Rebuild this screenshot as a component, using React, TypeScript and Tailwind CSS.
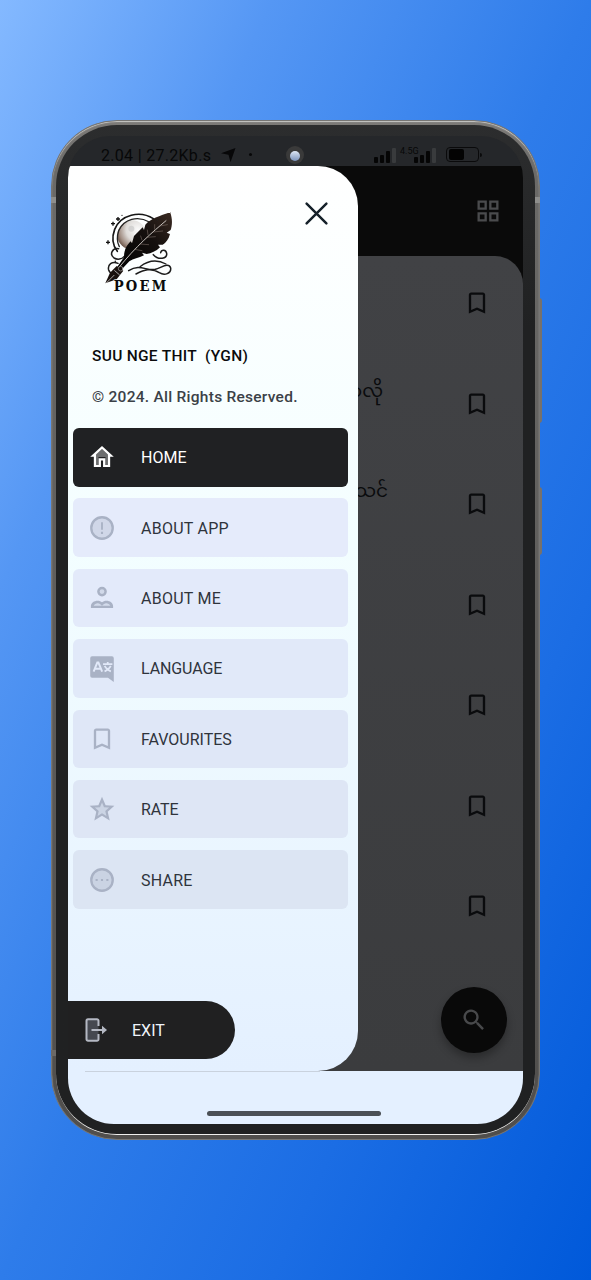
import type { ReactNode } from "react";

const FONT = "font-['Roboto','Inter','Noto_Sans',sans-serif]";

type IconProps = { children: ReactNode; className?: string };

function Icon({ children, className = "size-7" }: IconProps) {
  return (
    <svg viewBox="0 0 24 24" fill="currentColor" className={`block shrink-0 ${className}`}>
      {children}
    </svg>
  );
}

const homeIcon = (
  <Icon>
    <path opacity=".35" d="M12 5.2 6 10.6V19h3v-7h6v7h3v-8.4z" />
    <path d="M12 2.600 1.900 11.700h3.100V20.600h6.100v-5.600h1.800v5.600h6.100v-8.900h3.100L12 2.600zm5.100 16.200H14.900V13H9.100v5.800H6.900V9.800L12 5.200l5.100 4.600v9z" />
  </Icon>
);

const aboutIcon = (
  <Icon>
    <circle cx="12" cy="12" r="9" opacity=".35" />
    <path d="M12 1.800a10.200 10.200 0 1 0 0 20.400 10.200 10.200 0 0 0 0-20.400zm0 18.400a8.200 8.200 0 1 1 0-16.400 8.200 8.200 0 0 1 0 16.400z" />
    <path d="M11.200 7h1.600v6.600h-1.600zM11.100 15.300h1.800v1.800h-1.800z" />
  </Icon>
);

const personIcon = (
  <Icon>
    <circle cx="12" cy="6.500" r="3.100" fill="currentColor" fillOpacity=".3" stroke="currentColor" strokeWidth="2.100" />
    <path d="M2.500 20.500v-1.600c0-2.700 2.700-4.600 5.700-4.600 1.500 0 2.900.5 3.800 1.400.9-.9 2.300-1.400 3.800-1.400 3 0 5.700 1.900 5.700 4.600v1.600z" />
    <path d="M4.900 18.700c.5-1.500 2-2.300 3.500-2.300 1.400 0 2.300 1 3.600 2.300 1.300-1.300 2.200-2.300 3.600-2.300 1.500 0 3 .8 3.500 2.300z" fill="#d3dbeb" />
  </Icon>
);

const languageIcon = (
  <Icon>
    <path d="M3.500 2h17a1.600 1.600 0 0 1 1.600 1.600v20.300l-5-3.600H3.500a1.600 1.600 0 0 1-1.600-1.600V3.600A1.600 1.600 0 0 1 3.500 2z" />
    <path d="M4.800 15.200 8 7.200h.9l3.200 8M6 12.700h5.200" fill="none" stroke="#e2e9f9" strokeWidth="1.700" />
    <path d="M12.900 8.700h8M16.900 6.800v1.900M14.300 10.200c.6 1.300 1.700 2.400 2.600 3.100.9-.7 2-1.800 2.600-3.100M14.200 14.900c1-.4 1.900-.9 2.700-1.600.8.700 1.700 1.200 2.700 1.600" fill="none" stroke="#e2e9f9" strokeWidth="1.500" />
  </Icon>
);

const bookmarkPath = "M17 3H7c-1.100 0-2 .9-2 2v16l7-3 7 3V5c0-1.100-.9-2-2-2zm0 15-5-2.200L7 18V5h10v13z";

const favouriteIcon = (
  <Icon>
    <path d={bookmarkPath} />
  </Icon>
);

const starIcon = (
  <Icon>
    <path opacity=".35" d="m12 4.500 2 5.300 6 .5-4.500 4 1.300 5.500-4.800-3-4.800 3 1.300-5.500-4.500-4 6-.5z" />
    <path d="m22.600 9.300-7.500-.6L12 1.600 8.900 8.700l-7.500.6 5.700 5-1.700 7.500 6.600-4 6.600 4-1.700-7.500 5.700-5zM12 15.700l-3.800 2.300 1-4.300-3.300-2.900 4.400-.4L12 6.400l1.700 4 4.400.4-3.300 2.900 1 4.300z" />
  </Icon>
);

const shareIcon = (
  <Icon>
    <circle cx="12" cy="12" r="9" opacity=".35" />
    <path d="M12 1.800a10.200 10.200 0 1 0 0 20.400 10.200 10.200 0 0 0 0-20.400zm0 18.400a8.200 8.200 0 1 1 0-16.400 8.200 8.200 0 0 1 0 16.400z" />
    <path d="M6.500 11.200h1.800v1.600H6.500zM11.100 11.200h1.800v1.600h-1.800zM15.700 11.200h1.800v1.600h-1.800z" />
  </Icon>
);

const menu = [
  { label: "HOME", icon: homeIcon, style: "bg-[#202123] text-white", text: "text-white tracking-[0px]" },
  { label: "ABOUT APP", icon: aboutIcon, style: "bg-[#e5ebfb] text-[#a9b2c5]", text: "text-[#2f343c] tracking-[0.25px]" },
  { label: "ABOUT ME", icon: personIcon, style: "bg-[#e3eafa] text-[#a9b2c5]", text: "text-[#2f343c] tracking-[0.25px]" },
  { label: "LANGUAGE", icon: languageIcon, style: "bg-[#e1e9f9] text-[#a9b2c5]", text: "text-[#2f343c] tracking-[-0.1px]" },
  { label: "FAVOURITES", icon: favouriteIcon, style: "bg-[#dfe7f7] text-[#a9b2c5]", text: "text-[#2f343c] tracking-[0px]" },
  { label: "RATE", icon: starIcon, style: "bg-[#dee6f5] text-[#a9b2c5]", text: "text-[#2f343c] tracking-[-0.1px]" },
  { label: "SHARE", icon: shareIcon, style: "bg-[#dce5f3] text-[#a9b2c5]", text: "text-[#2f343c] tracking-[0.25px]" },
];

const poems = [
  { title: "", width: "w-[320px]" },
  { title: "လာလို", width: "w-[315px]" },
  { title: "သင်", width: "w-[320px]" },
  { title: "", width: "w-[320px]" },
  { title: "", width: "w-[320px]" },
  { title: "", width: "w-[320px]" },
  { title: "", width: "w-[320px]" },
];

function PoemLogo() {
  return (
    <svg viewBox="0 0 300 300" className="block size-[100px]" fill="none" strokeLinecap="round">
      <defs>
        <radialGradient id="moon" cx="70%" cy="32%" r="80%">
          <stop offset="0" stopColor="#fafafa" />
          <stop offset=".5" stopColor="#dedbd8" />
          <stop offset=".8" stopColor="#a08d82" />
          <stop offset="1" stopColor="#5d463a" />
        </radialGradient>
        <linearGradient id="quill" x1="1" y1="0" x2="0" y2="1">
          <stop offset="0" stopColor="#3a2a22" />
          <stop offset=".4" stopColor="#15100e" />
          <stop offset="1" stopColor="#000" />
        </linearGradient>
      </defs>
      <circle cx="126" cy="105" r="44" fill="url(#moon)" />
      <circle cx="124" cy="86" r="9" fill="#c4c4c4" opacity=".6" />
      <circle cx="138" cy="104" r="6" fill="#fff" opacity=".6" />
      <path d="M190 56C150 30 92 44 74 88c-9 24-6 48 8 66" stroke="#161616" strokeWidth="5" />
      <path d="M178 66C144 46 102 56 86 92c-6 18-5 34 2 48" stroke="#222" strokeWidth="4" />
      <path d="M86 146c-20-4-28 18-14 28 10 6 24 4 30-4M84 190c-18-8-32 4-28 20 4 12 18 14 26 6" stroke="#1c1c1c" strokeWidth="4.500" />
      <path d="M190 164c16 18 42 12 40-4-2-12-16-12-18-2M116 212c34-22 54 2 80-4 20-6 40-22 46-4 2 16-18 24-34 14-24-16-46-8-70 4" stroke="#1c1c1c" strokeWidth="4.500" />
      <path d="M150 200c26-20 52-22 78-8" stroke="#1c1c1c" strokeWidth="4" />
      <path d="M240 36c9 22 6 42 2 54l-12 8 10 4c-4 16-12 26-22 32l-14 0 6 8c-12 12-26 18-40 20l-14-4 6 8c-16 8-32 10-44 18l-28 30-12-8 24-34c0-22 8-36 20-48l4 6 6-22 26-26 4 8 4-16c16-18 42-26 76-38z" fill="url(#quill)" />
      <path d="M228 62C188 96 138 138 84 206" stroke="#ece7e2" strokeWidth="2.500" />
      <path d="m174 104-2-14M194 88l0-14M156 120l-4-12M210 78l22-4M170 112l26-2M190 96l28-3M150 132l26 2M134 148l22 4" stroke="#8d7d74" strokeWidth="1.500" />
      <path d="m80 198 20 14-20 26-34 12 14-32z" fill="#17100d" />
      <path d="m74 212 14 12M50 248l22-22" stroke="#eee" strokeWidth="2" />
      <circle cx="92" cy="206" r="7" fill="#17100d" stroke="#ddd" strokeWidth="1.500" />
      <path d="M69 65v12M63 71h12M84 51v12M78 57h12M54 121v12M48 127h12" stroke="#111" strokeWidth="4" strokeLinecap="butt" />
      <circle cx="96" cy="46" r="2" fill="#222" />
      <circle cx="76" cy="184" r="2.500" fill="#222" />
      <circle cx="202" cy="60" r="2" fill="#222" />
      <text transform="translate(71 273) scale(.84 1)" textLength="188" fill="#0b0b0b" stroke="#f8ffff" strokeWidth="3" paintOrder="stroke" className="font-['DejaVu_Serif','Liberation_Serif',serif] text-[47px] font-bold">POEM</text>
    </svg>
  );
}

function Signal() {
  return (
    <div className="flex h-4 items-end gap-[2px]">
      <i className="h-[6px] w-1 rounded-[1px] bg-[#050505]" />
      <i className="h-[8px] w-1 rounded-[1px] bg-[#050505]" />
      <i className="h-[12px] w-1 rounded-[1px] bg-[#050505]" />
      <i className="h-[15px] w-1 rounded-[1px] bg-[#393b3d]" />
    </div>
  );
}

function StatusBar() {
  return (
    <div className="flex h-[30px] shrink-0 items-center bg-[#25272a] pt-[7px] text-[#070708]">
      <span className="mt-[2px] ml-[33px] w-[110px] whitespace-nowrap text-[16px] tracking-[0.300px]">2.04 | 27.2Kb.s</span>
      <svg viewBox="0 0 16 16" className="ml-[10px] size-4"><path fill="currentColor" d="M14.500 1 0 6.200l7.500 1.500 2 7.500z" /></svg>
      <i className="ml-[12px] size-[3px] rounded-full bg-[#070708]" />
      <span className="ml-[34px] flex size-[18px] items-center justify-center rounded-full bg-[#3a3a3a] pt-[3px]">
        <i className="size-[10px] rounded-full bg-linear-to-b from-[#dfe8f5] to-[#7c93bb]" />
      </span>
      <div className="ml-[70px] flex items-end">
        <Signal />
        <span className="-mr-[5px] ml-[4px] self-start text-[9px] leading-[9px]">4.5G</span>
        <Signal />
      </div>
      <div className="ml-[10px] flex h-[15px] w-[33px] items-center rounded-[4px] border border-[#0a0a0b] p-[2px]">
        <i className="h-[11px] w-[15px] rounded-[2px] bg-[#030303]" />
      </div>
      <i className="ml-[1px] h-[4px] w-[2px] rounded-r bg-[#0a0a0b]" />
    </div>
  );
}

function PoemList() {
  return (
    <div className="flex h-full flex-col bg-[#0a0a0a]">
      <header className="flex h-[90px] shrink-0 items-start justify-end pt-[31px] pr-[21px] text-[#4a4b4d]">
        <Icon>
          <path d="M3 3v8h8V3H3zm6 6H5V5h4v4zM3 13v8h8v-8H3zm6 6H5v-4h4v4zM13 3v8h8V3h-8zm6 6h-4V5h4v4zM13 13v8h8v-8h-8zm6 6h-4v-4h4v4z" />
        </Icon>
      </header>
      <main className="relative grow rounded-tr-[28px] bg-linear-to-b from-[#414245] to-[#3b3c3e]">
        {poems.map((poem, i) => (
          <div key={i} className="flex h-[100.500px] items-start justify-between pt-[33px] pr-[32px] text-[#0a0b0d]">
            <span
              className={`-mt-[9px] text-right font-['Noto_Sans_Myanmar','Padauk','Noto_Sans',sans-serif] text-[18.500px] leading-[24px] whitespace-nowrap ${poem.width}`}
            >
              {poem.title}
            </span>
            <Icon>
              <path d={bookmarkPath} />
            </Icon>
          </div>
        ))}
        <button className="absolute right-[16.500px] bottom-[18.500px] flex size-[66px] items-center justify-center rounded-full bg-[#090909] text-[#48494b] shadow-[0_5px_9px_rgba(0,0,0,0.3)]">
          <Icon>
            <path d="M15.500 14h-.8l-.3-.3A6.500 6.500 0 1 0 13.700 14.400l.3.300v.8l5 5 1.500-1.500zm-6 0a4.500 4.500 0 1 1 0-9 4.500 4.500 0 0 1 0 9z" />
          </Icon>
        </button>
      </main>
    </div>
  );
}

function Drawer() {
  return (
    <aside className="absolute inset-y-0 left-0 flex w-[290px] flex-col overflow-hidden rounded-tl-[3px] rounded-r-[40px] bg-linear-to-b from-white via-[#f3feff] via-[42%] to-[#e4f0ff]">
      <div className="flex h-[172px] shrink-0 items-start justify-between pt-[34px] pr-[29px] pl-[22px]">
        <PoemLogo />
        <svg viewBox="0 0 24 24" className="mt-[1px] size-[25px] text-[#17222b]" fill="none" stroke="currentColor" strokeWidth="2.400" strokeLinecap="round">
          <path d="m2.500 2.500 19 19M21.500 2.500l-19 19" />
        </svg>
      </div>
      <div className="h-[90px] shrink-0 pl-[24px] whitespace-pre">
        <p className="mt-[8px] text-[15.500px] leading-[20px] font-medium tracking-[0.300px] text-[#0b0b0c]">SUU NGE THIT  (YGN)</p>
        <p className="mt-[21px] text-[15.500px] leading-[20px] font-medium tracking-[0.260px] text-[#3b4147]">© 2024. All Rights Reserved.</p>
      </div>
      <nav className="flex flex-col gap-[11.900px] pr-[10px] pl-[5px]">
        {menu.map((item) => (
          <a key={item.label} className={`flex h-[58.500px] items-center rounded-[6px] pl-[15px] ${item.style}`}>
            {item.icon}
            <span className={`mt-[2px] ml-[25px] text-[16px] leading-[20px] ${item.text}`}>{item.label}</span>
          </a>
        ))}
      </nav>
      <a className="mt-auto mb-[12px] flex h-[58.500px] w-[167px] shrink-0 items-center rounded-r-full bg-[#202021] pl-[15px] text-[#b4b8c3]">
        <svg viewBox="0 0 26 26" className="size-[26px]" fill="none" stroke="currentColor" strokeWidth="2">
          <path d="M15.500 9V3.800A1.500 1.500 0 0 0 14 2.300H5a1.500 1.500 0 0 0-1.500 1.500v18.400A1.500 1.500 0 0 0 5 23.700h9a1.500 1.500 0 0 0 1.500-1.500V17" fill="#454850" />
          <path d="M8.500 13H20" />
          <path d="m19 8.800 5 4.200-5 4.200z" fill="currentColor" stroke="none" />
        </svg>
        <span className="mt-[2px] ml-[23px] text-[16px] leading-[20px] text-[#eef3fa]">EXIT</span>
      </a>
    </aside>
  );
}

export default function App() {
  return (
    <div className={`h-[1280px] w-[591px] overflow-hidden bg-[linear-gradient(to_bottom_right,#84b9ff_0%,#5597f4_23%,#2e7cea_50%,#1b6de4_73%,#0059da_100%)] pt-[120px] pl-[51px] antialiased ${FONT}`}>
      <div className="relative h-[1020px] w-[489px]">
        <i className="absolute top-[178px] right-[-2px] h-[125px] w-[6px] rounded bg-[#77716b]" />
        <i className="absolute top-[367px] right-[-2px] h-[68px] w-[6px] rounded bg-[#77716b]" />
        <div className="relative h-full rounded-[66px] border border-[#777674] bg-linear-to-b from-[#7d7b78] via-[#6b6a68] via-5% to-[#504e4c] p-[4px] shadow-[inset_0_1px_1px_#c9c9c6]">
          <div className="h-full rounded-[61px] border-b-[1.500px] border-[#efefed] bg-linear-to-b from-[#2c2d2e] to-[#202122] to-20% px-[12px] pt-[11px] pb-[10px]">
            <div className="flex h-[988px] flex-col overflow-hidden rounded-t-[42px] rounded-b-[46px]">
              <StatusBar />
              <div className="relative h-[905px] shrink-0 bg-[#0a0a0a]">
                <PoemList />
                <Drawer />
              </div>
              <div className="flex h-[53px] shrink-0 justify-center bg-[#e4f0ff]">
                <div className="flex w-full flex-col items-center">
                  <i className="mr-[203px] ml-[17px] h-px self-stretch bg-[#c9d2de]" />
                  <i className="mt-[39px] mr-[3px] h-[5px] w-[174px] rounded-full bg-[#4b5056]" />
                </div>
              </div>
            </div>
          </div>
        </div>
        <i className="absolute top-[77px] left-0 h-[6px] w-[5px] bg-[#8e8e8c]" />
        <i className="absolute top-[77px] right-0 h-[6px] w-[5px] bg-[#8e8e8c]" />
        <i className="absolute top-[930px] left-0 h-[6px] w-[5px] bg-[#6b6967]" />
      </div>
    </div>
  );
}
